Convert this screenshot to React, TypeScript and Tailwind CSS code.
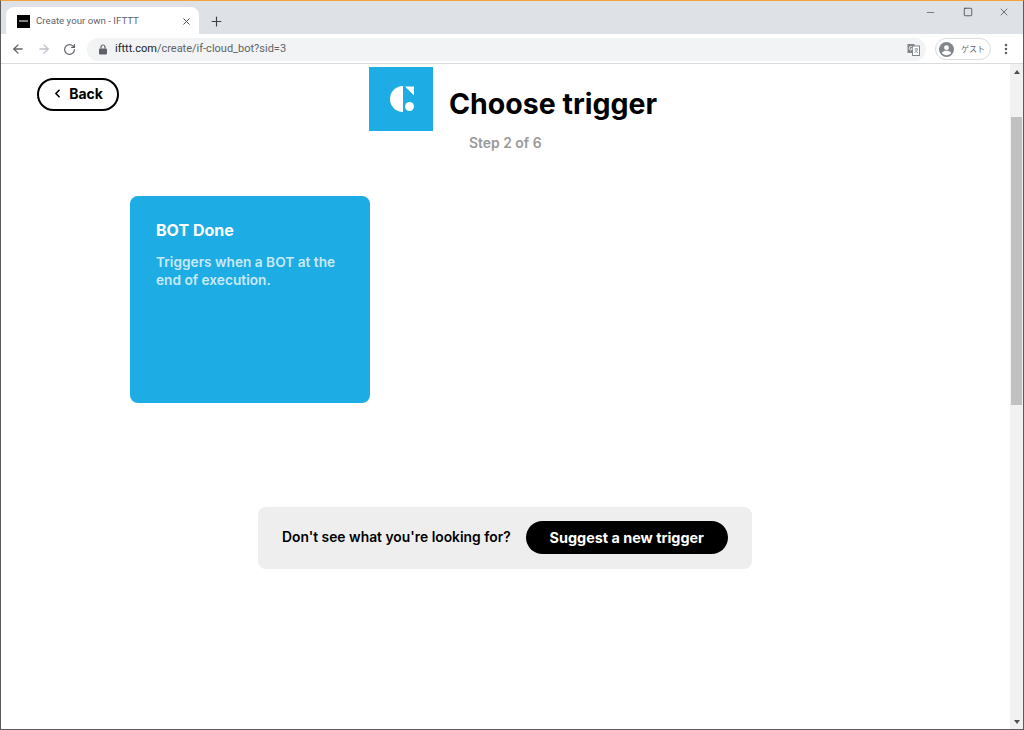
import { ArrowLeft, ArrowRight, ChevronLeft, Minus, MoreVertical, Plus, RotateCw, Square, X } from 'lucide-react'

const font = "font-['Inter',sans-serif]"

function TabStrip() {
  return (
    <div className="flex h-[33px] shrink-0 bg-[#dee1e6]">
      <div className="ml-[5px] mt-[6px] flex h-[27px] w-[193px] items-center rounded-t-lg bg-white pl-[11px] pr-[7px] pt-[1px]">
        {/* Favicon */}
        <div className="flex h-[13px] w-[13px] items-center justify-center bg-black">
          <div className="h-[2px] w-[9px] bg-white/50" />
        </div>
        <span className="ml-[6px] flex-1 truncate font-['Roboto',sans-serif] text-[9.7px] text-[#5f6368]">
          Create your own - IFTTT
        </span>
        <X size={11} strokeWidth={2} className="text-[#3c4043]" />
      </div>
      <Plus size={15} strokeWidth={1.8} className="ml-[10px] mt-[13px] text-[#3c4043]" />
      <div className="ml-auto flex">
        <div className="flex w-[38px] justify-center pt-[6px]">
          <Minus size={11} strokeWidth={1.2} className="text-[#222]" />
        </div>
        <div className="flex w-[37px] justify-center pt-[6px]">
          <Square size={10} strokeWidth={1.6} className="text-[#222]" />
        </div>
        <div className="flex w-[36px] justify-center pt-[5px]">
          <X size={12} strokeWidth={1.2} className="text-[#222]" />
        </div>
        <div className="w-[1px]" />
      </div>
    </div>
  )
}

function Toolbar() {
  return (
    <div className="flex h-[30px] shrink-0 items-center border-b border-[#dadce0] bg-white pt-[1px]">
      <ArrowLeft size={14} strokeWidth={2.2} className="ml-[10px] text-[#5f6368]" />
      <ArrowRight size={14} strokeWidth={2.2} className="ml-[12px] text-[#bdc1c6]" />
      <RotateCw size={13} strokeWidth={2.2} className="ml-[12px] text-[#5f6368]" />
      <div className="ml-[11px] flex h-[23px] w-[839px] items-center rounded-full bg-[#f1f3f4] pl-[11px] pr-[6px]">
        {/* Lock: solid body with open shackle */}
        <svg viewBox="0 0 10 11" className="h-[11px] w-[10px]">
          <rect x="1" y="4.500" width="8" height="6" rx="1" fill="#5f6368" />
          <path d="M3 4.500V3a2 2 0 0 1 4 0v1.500" stroke="#5f6368" strokeWidth="1.200" fill="none" />
        </svg>
        <span className="ml-[7px] font-['Roboto',sans-serif] text-[11px] text-[#5f6368]">
          <span className="text-[#202124]">ifttt.com</span>/create/if-cloud_bot?sid=3
        </span>
        {/* Translate icon */}
        <svg viewBox="0 0 13 13" className="ml-auto h-[13px] w-[13px]">
          <rect x="0.5" y="1" width="7" height="9" fill="#80868b" />
          <rect x="5.5" y="3" width="7" height="9.5" fill="#fff" stroke="#80868b" />
          <path d="M7.5 6h3.5M9.2 5v1M10.5 6c-.4 2-1.600 3-3 3.600M8 7c.5 1.200 1.400 2 3 2.600" stroke="#80868b" strokeWidth="0.8" fill="none" />
          <path d="M5.200 4C4.600 3.200 2.300 3.100 2.200 5.300c0 2 2.600 2.200 3 .5H3.800" stroke="#fff" strokeWidth="0.9" fill="none" />
        </svg>
      </div>
      <div className="ml-[9px] flex h-[22px] w-[56px] items-center rounded-full border border-[#dadce0] pl-[3px]">
        <svg viewBox="0 0 16 16" className="h-[15px] w-[15px]">
          <circle cx="8" cy="8" r="8" fill="#80868b" />
          <circle cx="8" cy="6" r="2.600" fill="#fff" />
          <path d="M3 11.800c1-1.800 3-2.400 5-2.400s4 .6 5 2.400c-1.200 1.500-3 2.300-5 2.300s-3.800-.8-5-2.300z" fill="#fff" />
        </svg>
        <span className="ml-[7px] font-['Noto_Sans_CJK_JP',sans-serif] text-[8px] text-[#5f6368]">ゲスト</span>
      </div>
      <MoreVertical size={14} strokeWidth={2.4} className="ml-[8px] text-[#5f6368]" />
    </div>
  )
}

function Scrollbar() {
  return (
    <div className="flex w-[13px] shrink-0 flex-col items-center bg-[#f1f1f1]">
      <div className="mt-[6px] h-0 w-0 border-x-[3px] border-b-[4px] border-x-transparent border-b-[#505050]" />
      <div className="mt-[43px] h-[288px] w-[11px] bg-[#c1c1c1]" />
      <div className="mb-[5px] mt-auto h-0 w-0 border-x-[3px] border-t-[4px] border-x-transparent border-t-[#505050]" />
    </div>
  )
}

function PageHeader() {
  return (
    <div className="flex items-start pt-[3px]">
      <button className="ml-[36px] mt-[11px] flex h-[33px] w-[82px] items-center justify-center rounded-full border-2 border-black bg-white pb-[2px] pr-[2px] text-[14px] font-bold text-black">
        <ChevronLeft size={13} strokeWidth={3} className="mr-[5px]" />
        Back
      </button>
      <div className="ml-[250px]">
        <div className="flex items-center">
          <div className="flex h-[64px] w-[64px] items-center justify-center bg-[#1eace4]">
            {/* Service logo */}
            <svg viewBox="0 0 25 26" className="h-[26px] w-[25px]">
              <path d="M14 0A13 13 0 0 0 14 26z" fill="#fff" />
              <path d="M16 0.500H25V9.500z" fill="#fff" />
              <circle cx="20.500" cy="20.500" r="4.500" fill="#fff" />
            </svg>
          </div>
          <h1 className="ml-[16px] mt-[10px] text-[28.500px] font-bold leading-none text-black">Choose trigger</h1>
        </div>
        <p className="ml-[100px] mt-[2px] text-[13.900px] font-semibold leading-[20px] text-[#999999]">Step 2 of 6</p>
      </div>
    </div>
  )
}

export default function App() {
  return (
    <div className={`flex h-[730px] w-[1024px] flex-col overflow-hidden border-x border-b border-[#5a5a5a] border-t border-t-[#f2a33c] ${font}`}>
      <TabStrip />
      <Toolbar />
      <div className="flex min-h-0 flex-1">
        <main className="min-w-0 flex-1 bg-white">
          <PageHeader />
          <div className="ml-[129px] mt-[43px] h-[207px] w-[240px] rounded-lg bg-[#1eace4] px-[26px] pt-[24px]">
            <h2 className="text-[16px] font-bold leading-[20px] text-white">BOT Done</h2>
            <p className="mt-[13px] text-[13.700px] font-semibold leading-[18px] text-white/75">
              Triggers when a BOT at the end of execution.
            </p>
          </div>
          <div className="ml-[257px] mt-[104px] flex h-[62px] w-[494px] items-center rounded-lg bg-[#eeeeee] pl-[24px]">
            <span className="mb-[1px] text-[13.850px] font-semibold text-black">Don't see what you're looking for?</span>
            <button className="mb-[1px] ml-[15px] h-[33px] w-[202px] rounded-full bg-black text-[14.400px] font-bold text-white">
              Suggest a new trigger
            </button>
          </div>
        </main>
        <Scrollbar />
      </div>
    </div>
  )
}
